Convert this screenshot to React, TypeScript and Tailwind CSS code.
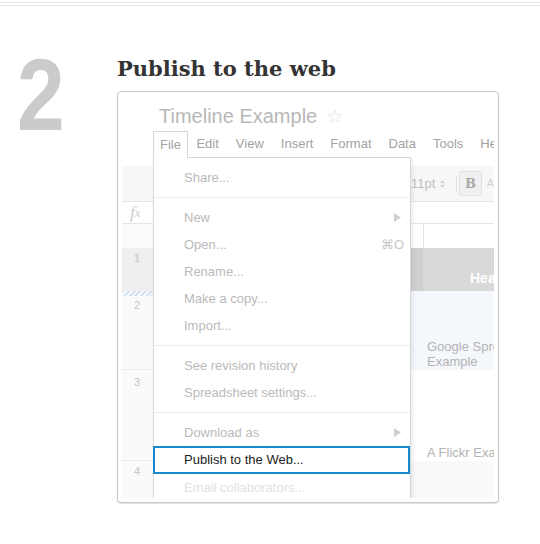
const sans = { fontFamily: '"Liberation Sans", Arial, sans-serif' }

const MenuItem = ({ label, right, arrow, faint }: { label: string; right?: string; arrow?: boolean; faint?: boolean }) => (
  <div className={`flex h-[27px] items-center justify-between pl-[30px] pr-[6px] text-[13px] ${faint ? 'text-[#e2e2e2]' : 'text-[#bababa]'}`}>
    <span>{label}</span>
    {right && <span className="text-[#c8c8c8]">{right}</span>}
    {arrow && (
      <svg width="7" height="9" viewBox="0 0 7 9" className="mr-[3px]">
        <polygon points="0,0 7,4.5 0,9" fill="#d0d0d0" />
      </svg>
    )}
  </div>
)

const Sep = () => <div className="my-[6px] h-px bg-[#ececec]" />

export default function App() {
  return (
    <div className="min-h-[544px] w-[540px] bg-white" style={sans}>
      <div className="mt-[2px] h-[4px] border-y border-[#e4e4e4]" />

      <div className="flex items-start">
        <div className="ml-[17px] mt-[38px] w-[100px] origin-left scale-x-[0.84] text-[102px] font-bold leading-none text-[#cbcbcb]">2</div>

        <div className="mt-[52px]">
          <h2 className="text-[21px] font-bold leading-[21px] text-[#333]" style={{ fontFamily: '"DejaVu Serif", serif' }}>
            Publish to the web
          </h2>

          <div className="mt-[12px] h-[412px] w-[382px] overflow-hidden rounded-[4px] border border-[#c8c8c8] bg-white p-1 shadow-[0_1px_1px_rgba(0,0,0,0.12)]">
            <div className="relative h-full overflow-hidden">
              {/* title */}
              <div className="flex h-[35px] items-start pl-[37px] pt-[9px]">
                <span className="text-[20px] leading-[23px] text-[#b8b8b8]">Timeline Example</span>
                <span className="ml-[9px] text-[19px] leading-[23px] text-[#e0e0e0]" style={{ fontFamily: '"DejaVu Sans", sans-serif' }}>☆</span>
              </div>

              {/* menu bar */}
              <div className="flex h-[26px] items-center pl-[31px] text-[13px] text-[#a3a3a3]">
                <div className="relative z-20 flex h-[27px] items-center self-start border-x border-t border-[#d8d8d8] bg-white px-[6px]">File</div>
                {['Edit', 'View', 'Insert', 'Format', 'Data', 'Tools', 'Help'].map((m) => (
                  <div key={m} className="whitespace-nowrap px-[8.5px] first:pl-[9px]">{m}</div>
                ))}
              </div>

              {/* toolbar */}
              <div className="mt-[9px] flex h-[36px] items-center border-b border-[#e6e6e6] bg-[#f7f7f7] pl-[289px] text-[13px] text-[#c0c0c0]">
                <span>11pt</span>
                <svg width="6" height="10" viewBox="0 0 6 10" className="ml-[5px]">
                  <polygon points="0,4 3,0 6,4" fill="#cfcfcf" />
                  <polygon points="0,6 3,10 6,6" fill="#cfcfcf" />
                </svg>
                <div className="ml-[11px] h-[16px] w-px bg-[#dedede]" />
                <div className="ml-[2px] flex h-[25px] w-[27px] items-center justify-center rounded-[2px] border border-[#e2e2e2] bg-[#f0f0f0] text-[13px] font-bold text-[#a8a8a8]" style={{ fontFamily: '"DejaVu Serif", serif' }}>B</div>
                <span className="ml-[5px] text-[11px] text-[#d0d0d0]">A</span>
              </div>

              {/* formula bar */}
              <div className="flex h-[22px] border-b border-[#e6e6e6]">
                <div className="flex w-[31px] items-center pl-[8px] text-[17px] italic text-[#cccccc]" style={{ fontFamily: '"Liberation Serif", serif' }}>
                  f<span className="text-[13px]">x</span>
                </div>
              </div>

              {/* sheet */}
              <div className="flex h-[24px]">
                <div className="w-[31px] bg-[#fbfbfb]" />
                <div className="w-[270px]" />
                <div className="flex-1 border-l border-[#e2e2e2]" />
              </div>

              <div className="flex h-[43px] text-[11px]">
                <div className="w-[31px] bg-[#efefef] pl-[12px] pt-[2px] text-[#c4c4c4]">1</div>
                <div className="w-[270px] bg-[#d0d0d0]" />
                <div className="flex flex-1 items-end overflow-hidden whitespace-nowrap bg-[#d9d9d9] pb-[2px] pl-[47px] text-[14px] font-bold text-white">Headline</div>
              </div>

              <div className="flex h-[79px] text-[11px]">
                <div className="w-[31px] border-b border-[#ebebeb] bg-[#fafafa] text-[#c4c4c4]">
                  <div className="h-[5px] bg-[repeating-linear-gradient(135deg,#d3e2f4_0,#d3e2f4_2px,#fafafa_2px,#fafafa_4px)]" />
                  <div className="pl-[12px] pt-[1px]">2</div>
                </div>
                <div className="w-[270px] bg-[#f4f7fb]" />
                <div className="flex flex-1 flex-col justify-end overflow-hidden whitespace-nowrap bg-[#f4f7fb] pb-[1px] pl-[4px] text-[13px] leading-[15px] text-[#b3b3b3]">
                  <span>Google Spreadsheet</span>
                  <span>Example</span>
                </div>
              </div>

              <div className="flex h-[91px] text-[11px]">
                <div className="w-[31px] border-b border-[#ebebeb] bg-[#fafafa] pl-[12px] pt-[4px] text-[#c4c4c4]">3</div>
                <div className="w-[270px]" />
                <div className="flex flex-1 flex-col justify-end overflow-hidden whitespace-nowrap pb-[1px] pl-[4px] text-[13px] leading-[15px] text-[#b3b3b3]">
                  A Flickr Example
                </div>
              </div>

              <div className="flex h-[60px] text-[11px]">
                <div className="w-[31px] bg-[#fafafa] pl-[12px] pt-[2px] text-[#c4c4c4]">4</div>
                <div className="flex-1 bg-[#f9f9f9]" />
              </div>

              {/* open File menu */}
              <div className="absolute bottom-0 left-[31px] top-[61px] z-10 w-[258px] border border-b-0 border-[#d8d8d8] bg-white pt-[6px] shadow-[2px_2px_4px_rgba(0,0,0,0.08)]">
                <MenuItem label="Share..." />
                <Sep />
                <MenuItem label="New" arrow />
                <MenuItem label="Open..." right="⌘O" />
                <MenuItem label="Rename..." />
                <MenuItem label="Make a copy..." />
                <MenuItem label="Import..." />
                <Sep />
                <MenuItem label="See revision history" />
                <MenuItem label="Spreadsheet settings..." />
                <Sep />
                <MenuItem label="Download as" arrow />
                <div className="-ml-px flex h-[28px] items-center border-2 border-[#1689cf] pl-[29px] text-[13px] text-[#222]">
                  Publish to the Web...
                </div>
                <MenuItem label="Email collaborators..." faint />
              </div>
            </div>
          </div>
        </div>
      </div>
    </div>
  )
}
